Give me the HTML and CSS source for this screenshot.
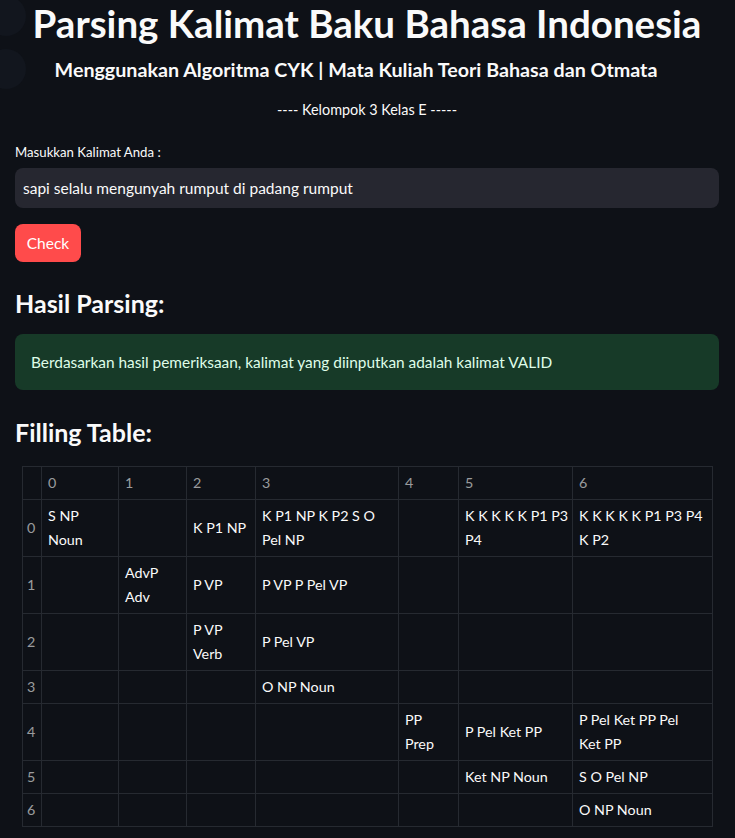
FILE: index.html
```html
<!DOCTYPE html>
<html lang="id">
<head>
<meta charset="utf-8">
<title>Parsing Kalimat Baku Bahasa Indonesia</title>
<link rel="stylesheet" href="styles.css">
</head>
<body>
<div class="app">
  <span class="edge-dot edge-dot-1"></span>
  <span class="edge-dot edge-dot-2"></span>
  <main class="main">
    <h1 class="title">Parsing Kalimat Baku Bahasa Indonesia</h1>
    <h3 class="subtitle">Menggunakan Algoritma CYK | Mata Kuliah Teori Bahasa dan Otmata</h3>
    <p class="group">---- Kelompok 3 Kelas E -----</p>
    <label class="label">Masukkan Kalimat Anda :</label>
    <div class="input">sapi selalu mengunyah rumput di padang rumput</div>
    <div class="btn-row"><button class="btn">Check</button></div>
    <h2 class="section">Hasil Parsing:</h2>
    <div class="alert">Berdasarkan hasil pemeriksaan, kalimat yang diinputkan adalah kalimat VALID</div>
    <h2 class="section section-2">Filling Table:</h2>
    <div class="table-wrap">
      <table class="cyk">
        <colgroup>
          <col class="c-idx"><col class="c0"><col class="c1"><col class="c2"><col class="c3"><col class="c4"><col class="c5"><col class="c6">
        </colgroup>
        <thead>
          <tr><th></th><th>0</th><th>1</th><th>2</th><th>3</th><th>4</th><th>5</th><th>6</th></tr>
        </thead>
        <tbody>
          <tr><th>0</th><td>S NP<br>Noun</td><td></td><td>K P1 NP</td><td>K P1 NP K P2 S O<br>Pel NP</td><td></td><td>K K K K K P1 P3<br>P4</td><td>K K K K K P1 P3 P4<br>K P2</td></tr>
          <tr><th>1</th><td></td><td>AdvP<br>Adv</td><td>P VP</td><td>P VP P Pel VP</td><td></td><td></td><td></td></tr>
          <tr><th>2</th><td></td><td></td><td>P VP<br>Verb</td><td>P Pel VP</td><td></td><td></td><td></td></tr>
          <tr><th>3</th><td></td><td></td><td></td><td>O NP Noun</td><td></td><td></td><td></td></tr>
          <tr><th>4</th><td></td><td></td><td></td><td></td><td>PP<br>Prep</td><td>P Pel Ket PP</td><td>P Pel Ket PP Pel<br>Ket PP</td></tr>
          <tr><th>5</th><td></td><td></td><td></td><td></td><td></td><td>Ket NP Noun</td><td>S O Pel NP</td></tr>
          <tr><th>6</th><td></td><td></td><td></td><td></td><td></td><td></td><td>O NP Noun</td></tr>
        </tbody>
      </table>
    </div>
  </main>
</div>
</body>
</html>
```
FILE: styles.css
```css
* { box-sizing: border-box; }
html, body {
  margin: 0;
  padding: 0;
  background: #0e1117;
}
body {
  font-family: "Lato", "Open Sans", sans-serif;
  color: #fafafa;
  width: 735px;
  height: 838px;
  overflow: hidden;
}
.app {
  position: relative;
  width: 735px;
  height: 838px;
}
.edge-dot {
  position: absolute;
  left: -14px;
  width: 40px;
  height: 40px;
  border-radius: 50%;
  background: #12161e;
}
.edge-dot-1 { top: -4px; }
.edge-dot-2 { top: 49px; }
.main {
  position: relative;
  display: flex;
  flex-direction: column;
  padding: 0 16px 0 15px;
}
.title {
  margin: 0;
  height: 46px;
  line-height: 46px;
  font-size: 38.5px;
  font-weight: 700;
  text-align: center;
  white-space: nowrap;
}
.subtitle {
  margin: 10px 0 0;
  padding-right: 22px;
  line-height: 28px;
  font-size: 19.7px;
  font-weight: 700;
  text-align: center;
}
.group {
  margin: 15px 0 0;
  line-height: 22px;
  font-size: 14.4px;
  text-align: center;
}
.label {
  display: block;
  margin: 21px 0 0;
  line-height: 20px;
  font-size: 13.2px;
}
.input {
  margin-top: 6px;
  height: 40px;
  line-height: 40px;
  padding: 0 8px;
  background: #262730;
  border-radius: 8px;
  font-size: 15.5px;
}
.btn-row {
  display: flex;
  margin-top: 16px;
}
.btn {
  height: 38px;
  width: 66px;
  padding: 0;
  border: none;
  border-radius: 8px;
  background: #ff4b4b;
  color: #ffffff;
  font-family: inherit;
  font-size: 15.5px;
}
.section {
  margin: 23px 0 0;
  line-height: 36px;
  font-size: 25px;
  font-weight: 700;
}
.section-2 { margin-top: 24px; }
.alert {
  margin-top: 13px;
  height: 56px;
  line-height: 56px;
  padding: 0 16px;
  background: #173a28;
  border-radius: 8px;
  color: #dffde9;
  font-size: 15.4px;
}
.table-wrap {
  margin: 16px 0 0 7px;
}
.cyk {
  border-collapse: collapse;
  table-layout: fixed;
  width: 690px;
  font-size: 14.3px;
}
.c-idx { width: 19px; }
.c0 { width: 77px; }
.c1 { width: 68px; }
.c2 { width: 69px; }
.c3 { width: 143px; }
.c4 { width: 60px; }
.c5 { width: 114px; }
.c6 { width: 140px; }
.cyk th, .cyk td {
  border: 1px solid #262a31;
  padding: 4px 6px;
  line-height: 24px;
  vertical-align: middle;
  text-align: left;
  white-space: nowrap;
  font-weight: 400;
}
.cyk thead th,
.cyk tbody th {
  color: rgba(250, 250, 250, 0.6);
}
.cyk tbody th {
  padding: 4px 4px;
}
.cyk td { color: #fafafa; }
```
